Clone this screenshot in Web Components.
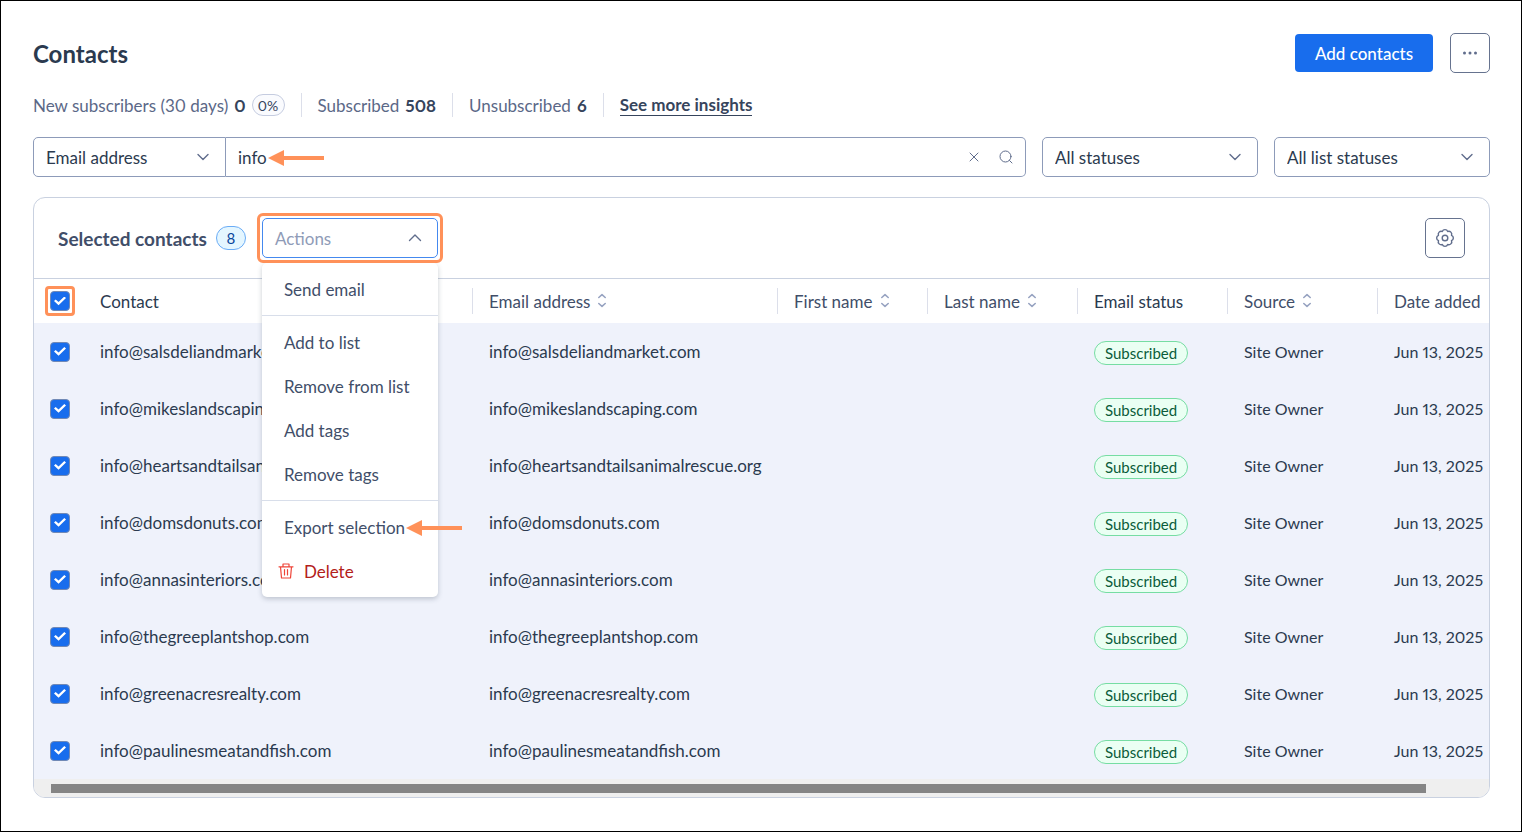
<!DOCTYPE html>
<html lang="en">
<head>
<meta charset="utf-8">
<meta name="viewport" content="width=device-width, initial-scale=1">
<title>Contacts</title>
<style>
  html { --ink: #2b3a4f; --muted: #5b6887; --body: #414e69; --line: #c9d1e0; --field: #8d9bb9; --accent: #ff9159; --blue: #186ded; }
  body { margin: 0; font-family: Lato, "Open Sans", sans-serif; font-size: 17px; line-height: 25px; font-variant-numeric: proportional-nums; color: var(--ink); background: #fff; }
</style>
</head>
<body>
<contacts-page></contacts-page>

<script>
const define = (name, html, setup) => {
  const template = document.createElement('template');
  template.innerHTML = html;
  customElements.define(name, class extends HTMLElement {
    constructor() {
      super();
      this.attachShadow({ mode: 'open' }).append(template.content.cloneNode(true));
    }
    connectedCallback() { if (setup) setup(this, this.shadowRoot); }
  });
};

const icons = {
  down: [16, '<path d="M3 5.5 8 10.5 13 5.5" stroke-width="1.4"/>'],
  up: [16, '<path d="M2.5 10.5 8 5 13.500 10.5" stroke-width="1.4"/>'],
  close: [16, '<path d="M4 4 12 12M12 4 4 12" stroke-width="1"/>'],
  search: [16, '<circle cx="7.500" cy="7.500" r="5.500" stroke-width="1"/><path d="M11.500 11.500 14 14" stroke-width="1"/>'],
  dots: [16, '<g fill="currentColor" stroke="none"><circle cx="2.500" cy="8" r="1.5"/><circle cx="8" cy="8" r="1.5"/><circle cx="13.500" cy="8" r="1.5"/></g>'],
  sort: [16, '<path d="M4.800 4.500 8 1.700 11.200 4.500M4.800 10.500 8 13.300 11.200 10.500" stroke-width="1.6"/>'],
  trash: [16, '<path d="M1 3.800H15M5 3.800V1H11V3.800M2.500 3.800 3.500 15H12.500L13.500 3.800M6.500 6.500V12M9.500 6.500V12" stroke-width="1.2"/>'],
  gear: [20, '<circle cx="10" cy="10" r="2.800" stroke-width="1.4"/><path d="M7.300 3.500A2.900 2.900 0 0 1 12.700 3.500A2.900 2.900 0 0 1 16.500 7.300A2.900 2.900 0 0 1 16.500 12.700A2.900 2.900 0 0 1 12.700 16.500A2.900 2.900 0 0 1 7.300 16.500A2.900 2.900 0 0 1 3.500 12.700A2.900 2.900 0 0 1 3.500 7.300A2.900 2.900 0 0 1 7.300 3.500Z" stroke-width="1.4"/>'],
};

define('ui-icon', `
  <style>
    :host { display: inline-flex; flex: none; color: #606d8c; }
    svg { display: block; fill: none; stroke: currentColor; stroke-linecap: round; stroke-linejoin: round; }
  </style>
  <svg aria-hidden="true"></svg>`, (host, root) => {
  const [size, shape] = icons[host.getAttribute('name')];
  const svg = root.querySelector('svg');
  svg.setAttribute('width', size);
  svg.setAttribute('height', size);
  svg.setAttribute('viewBox', `0 0 ${size} ${size}`);
  svg.innerHTML = shape;
});

define('pointer-arrow', `
  <style>
    :host { display: block; position: absolute; pointer-events: none; color: var(--accent); }
    svg { display: block; }
  </style>
  <svg width="56" height="16" viewBox="0 0 56 16" aria-hidden="true"><path d="M0 8 16 0V6H56V10H16V16Z" fill="currentColor"/></svg>`);

define('ui-button', `
  <style>
    :host { display: block; }
    button { display: flex; align-items: center; justify-content: center; box-sizing: border-box; width: 40px; height: 40px; padding: 0; border: 1px solid #66738f; border-radius: 5px; background: #fff; color: inherit; font: inherit; }
    :host([primary]) button { width: 138px; height: 38px; border: 0; border-radius: 4px; background: var(--blue); color: #fff; font-weight: 500; }
  </style>
  <button type="button"><slot></slot></button>`, (host, root) => {
  if (host.hasAttribute('label')) root.querySelector('button').setAttribute('aria-label', host.getAttribute('label'));
});

define('stat-item', `
  <style>
    :host { display: flex; align-items: center; gap: 6px; height: 24px; padding-right: 16px; margin-right: 16px; border-right: 1px solid #dcdfea; color: var(--muted); white-space: nowrap; }
    b { font-weight: 700; color: #36445c; }
  </style>
  <slot></slot><b></b><slot name="trend"></slot>`, (host, root) => {
  root.querySelector('b').textContent = host.getAttribute('value');
});

define('trend-pill', `
  <style>
    :host { display: flex; align-items: center; justify-content: center; box-sizing: border-box; min-width: 33px; height: 22px; padding: 0 5px; border: 1px solid #c5cce0; border-radius: 11px; background: #fafbfe; color: #36445c; font-size: 14px; }
  </style>
  <slot></slot>`);

define('filter-select', `
  <style>
    :host { display: grid; align-items: center; box-sizing: border-box; flex: none; width: 216px; height: 40px; border: 1px solid var(--field); border-radius: 5px; background: #fff; }
    :host([joined]) { width: 193px; border-radius: 5px 0 0 5px; }
    select, ui-icon { grid-area: 1 / 1; }
    select { appearance: none; width: 100%; height: 38px; padding: 0 40px 0 12px; border: 0; background: transparent; font: inherit; color: inherit; outline: 0; }
    ui-icon { justify-self: end; margin-right: 14px; pointer-events: none; }
  </style>
  <select><option></option></select><ui-icon name="down"></ui-icon>`, (host, root) => {
  root.querySelector('option').textContent = host.getAttribute('value');
  root.querySelector('select').setAttribute('aria-label', host.getAttribute('label'));
});

define('search-field', `
  <style>
    :host { display: flex; align-items: center; position: relative; flex: 1; min-width: 200px; box-sizing: border-box; height: 40px; padding: 0 11px 0 12px; border: 1px solid var(--field); border-left: 0; border-radius: 0 5px 5px 0; }
    input { flex: 1; min-width: 0; height: 38px; padding: 0; border: 0; outline: 0; background: none; font: inherit; color: inherit; }
    button { display: flex; padding: 0; border: 0; margin-left: 16px; background: none; }
    pointer-arrow { left: 42px; top: 12px; }
  </style>
  <input type="text" value="info" aria-label="Search contacts">
  <button type="button" aria-label="Clear search"><ui-icon name="close"></ui-icon></button>
  <button type="button" aria-label="Search"><ui-icon name="search"></ui-icon></button>
  <pointer-arrow></pointer-arrow>`);

define('menu-item', `
  <style>
    :host { display: block; }
    button { display: flex; align-items: center; gap: 10px; width: 100%; height: 44px; padding: 0 0 0 22px; border: 0; background: none; font: inherit; color: var(--body); white-space: nowrap; text-align: left; }
    :host([danger]) button { padding-left: 16px; color: #b3201a; }
    ::slotted(ui-icon) { color: #ee4438; }
  </style>
  <button type="button" role="menuitem"><slot></slot></button>`);

define('actions-menu', `
  <style>
    :host { display: block; position: relative; width: 176px; }
    .trigger { display: flex; align-items: center; justify-content: space-between; box-sizing: border-box; width: 100%; height: 40px; padding: 0 14px 0 12px; border: 1px solid #4489ef; border-radius: 5px; background: #fff; font: inherit; color: #8f9bb7; }
    .ring { position: absolute; z-index: 3; inset: -5px; border: 3px solid var(--accent); border-radius: 6px; pointer-events: none; }
    .menu { position: absolute; z-index: 2; top: 45px; left: 0; right: 0; border-radius: 5px; background: #fff; box-shadow: 0 2px 5px #2b3a4f40; }
    .group { padding: 4px 0; }
    .group + .group { border-top: 1px solid #d8deea; }
    pointer-arrow { left: 144px; top: 257px; }
  </style>
  <button class="trigger" type="button" aria-haspopup="menu" aria-expanded="true">Actions<ui-icon name="up"></ui-icon></button>
  <div class="ring"></div>
  <div class="menu" role="menu">
    <div class="group"><menu-item>Send email</menu-item></div>
    <div class="group">
      <menu-item>Add to list</menu-item>
      <menu-item>Remove from list</menu-item>
      <menu-item>Add tags</menu-item>
      <menu-item>Remove tags</menu-item>
    </div>
    <div class="group">
      <menu-item>Export selection</menu-item>
      <menu-item danger><ui-icon name="trash"></ui-icon>Delete</menu-item>
    </div>
    <pointer-arrow></pointer-arrow>
  </div>`);

define('check-box', `
  <style>
    :host { display: block; position: relative; width: 20px; height: 20px; }
    input { appearance: none; display: grid; place-items: center; box-sizing: border-box; width: 20px; height: 20px; margin: 0; border: 1px solid #7189b5; border-radius: 4px; background: #fff; }
    input:checked { background: var(--blue); }
    input:checked::before { content: ""; width: 12px; height: 9px; background: #fff; clip-path: polygon(0 50%, 14% 32%, 38% 62%, 86% 0, 100% 16%, 38% 96%); }
    :host([highlight])::after { content: ""; position: absolute; inset: -5px; border: 3px solid var(--accent); border-radius: 4px; pointer-events: none; }
  </style>
  <input type="checkbox" checked>`, (host, root) => {
  root.querySelector('input').setAttribute('aria-label', host.getAttribute('label'));
});

define('status-badge', `
  <style>
    :host { display: inline-flex; align-items: center; box-sizing: border-box; height: 24px; padding: 0 10px; border: 1px solid #76dda3; border-radius: 12px; background: #eafff3; color: #0b5c3a; font-size: 15px; line-height: 22px; vertical-align: middle; }
  </style>
  <slot></slot>`);

define('contacts-table', `
  <style>
    :host { display: block; overflow: hidden; }
    table { width: 100%; table-layout: fixed; border-collapse: collapse; }
    th, td { padding: 0; text-align: left; font-weight: 400; white-space: nowrap; }
    th { height: 44px; }
    td { height: 57px; background: #eff2fb; }
    .check { width: 50px; }
    .check check-box { margin-left: 16px; }
    .email { width: 305px; }
    .mid { width: 150px; }
    .date { width: 112px; }
    th div, td div { display: flex; align-items: center; gap: 4px; height: 26px; padding-left: 16px; }
    td div { padding-left: 17px; }
    td.contact div { padding-left: 16px; }
    td.status div { padding-top: 2px; }
    td.small { font-size: 16px; }
    .email div, .mid div, .date div { border-left: 1px solid #dcdfea; }
    .sortable { color: var(--body); }
    .sortable ui-icon { color: #97a3c1; }
    .bar { display: flex; padding: 5px 63px 4px 17px; background: #efefef; }
    .bar i { flex: 1; height: 9px; background: #858585; }
  </style>
  <table>
    <thead><tr>
      <th class="check" scope="col"><check-box highlight label="Select all contacts"></check-box></th>
      <th scope="col"><div>Contact</div></th>
      <th class="email sortable" scope="col"><div>Email address<ui-icon name="sort"></ui-icon></div></th>
      <th class="mid sortable" scope="col"><div>First name<ui-icon name="sort"></ui-icon></div></th>
      <th class="mid sortable" scope="col"><div>Last name<ui-icon name="sort"></ui-icon></div></th>
      <th class="mid" scope="col"><div>Email status</div></th>
      <th class="mid sortable" scope="col"><div>Source<ui-icon name="sort"></ui-icon></div></th>
      <th class="date sortable" scope="col"><div>Date added</div></th>
    </tr></thead>
    <tbody></tbody>
  </table>
  <div class="bar"><i></i></div>`, (host, root) => {
  const emails = ['info@salsdeliandmarket.com', 'info@mikeslandscaping.com', 'info@heartsandtailsanimalrescue.org', 'info@domsdonuts.com', 'info@annasinteriors.com', 'info@thegreeplantshop.com', 'info@greenacresrealty.com', 'info@paulinesmeatandfish.com'];
  root.querySelector('tbody').innerHTML = emails.map(email => `
    <tr>
      <td class="check"><check-box label="Select ${email}"></check-box></td>
      <td class="contact"><div>${email}</div></td>
      <td><div>${email}</div></td>
      <td></td>
      <td></td>
      <td class="status"><div><status-badge>Subscribed</status-badge></div></td>
      <td class="small"><div>Site Owner</div></td>
      <td class="small"><div>Jun 13, 2025</div></td>
    </tr>`).join('');
});

define('contacts-page', `
  <style>
    :host { display: flex; flex-direction: column; gap: 20px; box-sizing: border-box; min-height: 100vh; padding: 32px 31px 33px 32px; border: 1px solid #000; }
    header, .stats, .filters, .toolbar, .actions, .search { display: flex; align-items: center; }
    header { justify-content: space-between; height: 40px; }
    h1 { margin: 0; font-size: 24px; font-weight: 700; }
    .actions { gap: 17px; }
    .stats { height: 24px; }
    a { border-bottom: 1px solid #36445c; line-height: 20px; font-weight: 700; color: #36445c; text-decoration: none; }
    .filters { gap: 16px; }
    .search { flex: 1; }
    .card { overflow: hidden; border: 1px solid var(--line); border-radius: 12px; }
    .toolbar { box-sizing: border-box; height: 81px; padding: 0 24px; border-bottom: 1px solid var(--line); }
    h2 { margin: 0 9px 0 0; font-size: 19px; font-weight: 700; color: var(--body); }
    .count { display: flex; align-items: center; justify-content: center; box-sizing: border-box; width: 30px; height: 24px; margin-right: 16px; border: 1px solid #6aacf6; border-radius: 12px; background: #e4f6ff; color: #0b469b; font-size: 15px; }
    .toolbar ui-button { margin-left: auto; }
  </style>
  <header>
    <h1>Contacts</h1>
    <div class="actions">
      <ui-button primary>Add contacts</ui-button>
      <ui-button label="More options"><ui-icon name="dots"></ui-icon></ui-button>
    </div>
  </header>
  <div class="stats">
    <stat-item value="0">New subscribers (30 days)<trend-pill slot="trend">0%</trend-pill></stat-item>
    <stat-item value="508">Subscribed</stat-item>
    <stat-item value="6">Unsubscribed</stat-item>
    <a href="#insights">See more insights</a>
  </div>
  <div class="filters">
    <div class="search">
      <filter-select joined label="Search by" value="Email address"></filter-select>
      <search-field></search-field>
    </div>
    <filter-select label="Status" value="All statuses"></filter-select>
    <filter-select label="List status" value="All list statuses"></filter-select>
  </div>
  <section class="card">
    <div class="toolbar">
      <h2>Selected contacts</h2>
      <span class="count">8</span>
      <actions-menu></actions-menu>
      <ui-button label="Table settings"><ui-icon name="gear"></ui-icon></ui-button>
    </div>
    <contacts-table></contacts-table>
  </section>`);
</script>
</body>
</html>
